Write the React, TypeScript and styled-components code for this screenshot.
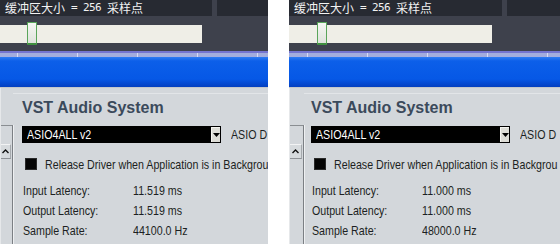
import React from "react";
import styled, { createGlobalStyle } from "styled-components";

const Global = createGlobalStyle`
  html, body { margin: 0; padding: 0; background: #ffffff; }
  body { width: 560px; height: 244px; overflow: hidden; }
`;

const Page = styled.div`
  display: flex;
  gap: 21px;
  width: 560px;
  height: 244px;
`;

const Panel = styled.div<{ $w: number }>`
  width: ${(p) => p.$w}px;
  height: 244px;
  display: flex;
  flex-direction: column;
  overflow: hidden;
  flex: none;
  background: #d3d7db;
`;

const TopRow = styled.div`
  height: 16px;
  display: flex;
  gap: 5px;
  background: #3e414c;
  flex: none;
`;

const DarkBox = styled.div<{ $w?: number }>`
  ${(p) => (p.$w ? `width: ${p.$w}px; flex: none;` : "flex: 1;")}
  background: #272a32;
  color: #f2f2f2;
  line-height: 16px;
  padding-left: 5px;
  white-space: nowrap;
  overflow: hidden;
  display: flex;
  align-items: center;
`;

const Cjk = styled.span`
  font-family: "Noto Sans CJK SC", sans-serif;
  font-size: 12px;
  line-height: 16px;
`;

const Ascii = styled.span`
  font-family: "DejaVu Sans Mono", monospace;
  font-size: 11px;
  letter-spacing: -0.62px;
  line-height: 16px;
  white-space: pre;
`;

const SliderArea = styled.div`
  height: 35px;
  background: #3e414c;
  padding-top: 9px;
  box-sizing: border-box;
  flex: none;
`;

const Track = styled.div<{ $w: number }>`
  position: relative;
  width: ${(p) => p.$w}px;
  height: 18px;
  background: #efeee7;
`;

const Thumb = styled.div<{ $x: number }>`
  position: absolute;
  left: ${(p) => p.$x}px;
  top: -3px;
  width: 10px;
  height: 23px;
  box-sizing: border-box;
  border: 1px solid #5aa55a;
  border-bottom: 2px solid #3f8f3f;
  border-radius: 1px;
  background: linear-gradient(#f4f6f2, #dfe3dc);
`;

const PurpleLine = styled.div`
  height: 2px;
  background: #7474cf;
  flex: none;
`;

const TickStrip = styled.div<{ $offset: number }>`
  height: 4px;
  flex: none;
  background-color: #a3addd;
  background-image: repeating-linear-gradient(
    90deg,
    #d6dcf2 0px,
    #d6dcf2 1px,
    transparent 1px,
    transparent 60px
  );
  background-position: ${(p) => p.$offset}px 0;
`;

const BlueBar = styled.div`
  height: 30px;
  flex: none;
  background: linear-gradient(
    #2f7bf2 0px,
    #0c5fe9 4px,
    #0658e6 22px,
    #0448cf 27px,
    #033fbf 30px
  );
`;

const Lower = styled.div`
  flex: 1;
  display: flex;
  background: #d3d7db;
  border-top: 1px solid #c4c8cc;
`;

const Strip = styled.div<{ $w: number }>`
  width: ${(p) => p.$w}px;
  flex: none;
  display: flex;
  flex-direction: column;
  border-left: 1px solid #e6e8ea;
  box-sizing: border-box;
`;

const StripSpacer = styled.div`
  height: 37px;
  flex: none;
`;

const ListBox = styled.div`
  flex: 1;
  border-top: 1px solid #8a8e92;
  border-right: 1px solid #7b7f84;
  box-shadow: 1px 0 0 #eef0f2;
  padding-top: 18px;
  box-sizing: border-box;
`;

const ScrollBtn = styled.div`
  height: 15px;
  margin-right: 1px;
  box-sizing: border-box;
  border-top: 1px solid #f2f3f4;
  border-bottom: 1px solid #8e9296;
  border-right: 1px solid #a6aaae;
  background: #d6dadd;
  display: flex;
  align-items: center;
  justify-content: center;
`;

const Content = styled.div<{ $pad: number }>`
  flex: 1;
  min-width: 0;
  padding-left: ${(p) => p.$pad}px;
  padding-top: 5px;
  display: flex;
  flex-direction: column;
  white-space: nowrap;
  border-top: 1px solid #e2e5e8;
  margin-top: 5px;
`;

const Heading = styled.div`
  font-family: "Liberation Sans", Arial, sans-serif;
  font-weight: bold;
  font-size: 16px;
  line-height: 18px;
  color: #3b4a5b;
`;

const SelectRow = styled.div`
  display: flex;
  align-items: center;
  margin-top: 9px;
  height: 17px;
`;

const Select = styled.div`
  width: 199px;
  height: 17px;
  flex: none;
  background: #000000;
  display: flex;
  align-items: center;
  justify-content: space-between;
  box-sizing: border-box;
  padding: 1px 1px 1px 5px;
`;

const ArrowBtn = styled.div`
  width: 9px;
  height: 15px;
  box-sizing: border-box;
  background: #dcdcd6;
  border-top: 1px solid #f4f4f0;
  border-left: 1px solid #f4f4f0;
  display: flex;
  align-items: center;
  justify-content: center;
`;

/* Narrow sans text (the UI uses an Arial Narrow–like face) */
const Narrow = styled.span<{ $ml?: number; $color?: string }>`
  display: inline-block;
  font-family: "Liberation Sans", Arial, sans-serif;
  font-size: 13px;
  line-height: 15px;
  color: ${(p) => p.$color ?? "#1c1f22"};
  margin-left: ${(p) => p.$ml ?? 0}px;
  transform: scaleX(0.82);
  transform-origin: 0 50%;
  white-space: nowrap;
`;

const CheckRow = styled.div`
  display: flex;
  align-items: center;
  height: 20px;
  margin-top: 11px;
  margin-bottom: 6px;
`;

const CheckBox = styled.div`
  width: 12px;
  height: 12px;
  margin-left: 3px;
  margin-right: 8px;
  flex: none;
  background: #050505;
  box-shadow: inset 0 0 0 1px #2a2a2a;
`;

const InfoRow = styled.div`
  display: grid;
  grid-template-columns: 110px auto;
  align-items: center;
  height: 20px;
  padding-left: 1px;
`;

type PanelData = {
  width: number;
  strip: number;
  firstBox: number;
  track: number;
  thumb: number;
  tick: number;
  rows: [string, string][];
};

const panels: PanelData[] = [
  {
    width: 268,
    strip: 13,
    firstBox: 207,
    track: 202,
    thumb: 27,
    tick: 17,
    rows: [
      ["Input Latency:", "11.519 ms"],
      ["Output Latency:", "11.519 ms"],
      ["Sample Rate:", "44100.0 Hz"],
    ],
  },
  {
    width: 271,
    strip: 15,
    firstBox: 208,
    track: 203,
    thumb: 28,
    tick: 18,
    rows: [
      ["Input Latency:", "11.000 ms"],
      ["Output Latency:", "11.000 ms"],
      ["Sample Rate:", "48000.0 Hz"],
    ],
  },
];

function AsioPanel({ d }: { d: PanelData }) {
  return (
    <Panel $w={d.width}>
      <TopRow>
        <DarkBox $w={d.firstBox}>
          <Cjk>缓冲区大小</Cjk>
          <Ascii> = 256 </Ascii>
          <Cjk>采样点</Cjk>
        </DarkBox>
        <DarkBox />
      </TopRow>
      <SliderArea>
        <Track $w={d.track}>
          <Thumb $x={d.thumb} />
        </Track>
      </SliderArea>
      <PurpleLine />
      <TickStrip $offset={d.tick} />
      <BlueBar />
      <Lower>
        <Strip $w={d.strip}>
          <StripSpacer />
          <ListBox>
            <ScrollBtn>
              <svg width="7" height="5" viewBox="0 0 7 5">
                <path d="M0.5 4 L3.5 1 L6.5 4" fill="none" stroke="#111" strokeWidth="1.4" />
              </svg>
            </ScrollBtn>
          </ListBox>
        </Strip>
        <Content $pad={22 - d.strip}>
          <Heading>VST Audio System</Heading>
          <SelectRow>
            <Select>
              <Narrow $color="#ffffff">ASIO4ALL v2</Narrow>
              <ArrowBtn>
                <svg width="7" height="4" viewBox="0 0 7 4">
                  <path d="M0 0 H7 L3.5 4 Z" fill="#000" />
                </svg>
              </ArrowBtn>
            </Select>
            <Narrow $ml={10}>ASIO D</Narrow>
          </SelectRow>
          <CheckRow>
            <CheckBox />
            <Narrow>Release Driver when Application is in Backgrou</Narrow>
          </CheckRow>
          {d.rows.map(([k, v]) => (
            <InfoRow key={k}>
              <Narrow>{k}</Narrow>
              <Narrow>{v}</Narrow>
            </InfoRow>
          ))}
        </Content>
      </Lower>
    </Panel>
  );
}

export default function App() {
  return (
    <>
      <Global />
      <Page>
        {panels.map((d, i) => (
          <AsioPanel key={i} d={d} />
        ))}
      </Page>
    </>
  );
}
